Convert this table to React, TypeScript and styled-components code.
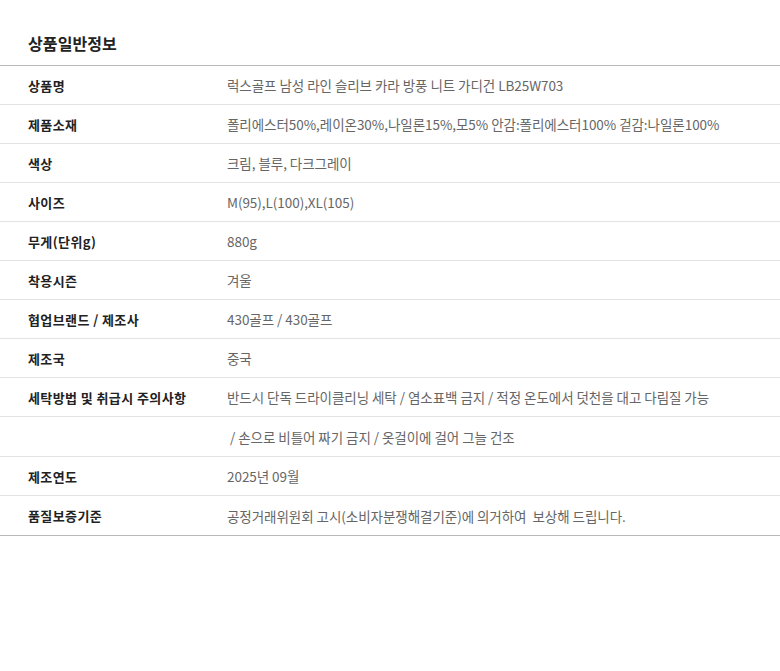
import React from "react";
import styled, { createGlobalStyle } from "styled-components";

const Global = createGlobalStyle`
  html, body { margin: 0; padding: 0; background: #fff; }
  body { font-family: "Noto Sans CJK KR", "Noto Sans", sans-serif; }
`;

const Page = styled.div`
  width: 780px;
  background: #fff;
`;

const Title = styled.h2`
  margin: 0;
  padding: 32px 28px 11px;
  font-size: 16px;
  line-height: 22px;
  font-weight: 700;
  color: #222;
  letter-spacing: 0.1px;
`;

const Table = styled.div`
  border-top: 1px solid #b9b9b9;
  border-bottom: 1px solid #b9b9b9;
`;

const Row = styled.div<{ $tall?: boolean }>`
  display: grid;
  grid-template-columns: 199px 1fr;
  align-items: center;
  height: ${(p) => (p.$tall ? 39 : 38)}px;
  padding-left: 28px;
  & + & { border-top: 1px solid #e3e3e3; }
`;

const Label = styled.div`
  font-size: 13px;
  font-weight: 700;
  color: #222;
  letter-spacing: 0.4px;
  white-space: nowrap;
`;

const Value = styled.div`
  font-size: 13.5px;
  color: #666;
  letter-spacing: -0.05px;
  white-space: pre;
`;

const rows: { label: string; value: string; tall?: boolean }[] = [
  { label: "상품명", value: "럭스골프 남성 라인 슬리브 카라 방풍 니트 가디건 LB25W703" },
  { label: "제품소재", value: "폴리에스터50%,레이온30%,나일론15%,모5% 안감:폴리에스터100% 겉감:나일론100%" },
  { label: "색상", value: "크림, 블루, 다크그레이" },
  { label: "사이즈", value: "M(95),L(100),XL(105)" },
  { label: "무게(단위g)", value: "880g" },
  { label: "착용시즌", value: "겨울" },
  { label: "협업브랜드 / 제조사", value: "430골프 / 430골프" },
  { label: "제조국", value: "중국" },
  { label: "세탁방법 및 취급시 주의사항", value: "반드시 단독 드라이클리닝 세탁 / 염소표백 금지 / 적정 온도에서 덧천을 대고 다림질 가능" },
  { label: "", value: " / 손으로 비틀어 짜기 금지 / 옷걸이에 걸어 그늘 건조", tall: true },
  { label: "제조연도", value: "2025년 09월" },
  { label: "품질보증기준", value: "공정거래위원회 고시(소비자분쟁해결기준)에 의거하여  보상해 드립니다.", tall: true },
];

export default function App() {
  return (
    <Page>
      <Global />
      <Title>상품일반정보</Title>
      <Table>
        {rows.map((r, i) => (
          <Row key={i} $tall={r.tall}>
            <Label>{r.label}</Label>
            <Value>{r.value}</Value>
          </Row>
        ))}
      </Table>
    </Page>
  );
}
